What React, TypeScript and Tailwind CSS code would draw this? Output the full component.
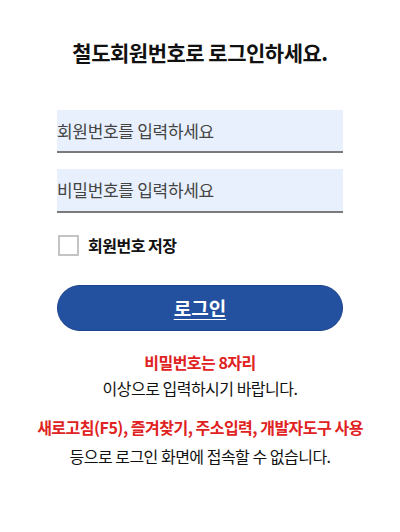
import React from "react";

export default function App() {
  return (
    <div
      className="w-[400px] h-[532px] bg-white flex flex-col items-center"
      style={{ fontFamily: '"Noto Sans CJK KR", "Noto Sans", sans-serif' }}
    >
      <h1 className="mt-[37px] text-[21px] leading-[30px] font-bold text-[#111] tracking-[-0.5px]">
        철도회원번호로 로그인하세요.
      </h1>
      <div className="mt-[43px] w-[286px] flex flex-col">
        <div className="h-[43px] bg-[#e8f0fe] border-b-2 border-[#7a7a7a] flex items-center">
          <span className="text-[17px] text-[#444] tracking-[-0.3px]">회원번호를 입력하세요</span>
        </div>
        <div className="mt-[16px] h-[44px] bg-[#e8f0fe] border-b-2 border-[#7a7a7a] flex items-center">
          <span className="text-[17px] text-[#444] tracking-[-0.3px]">비밀번호를 입력하세요</span>
        </div>
        <div className="mt-[20px] flex items-center">
          <div className="w-[21px] h-[21px] border-2 border-[#c4c4c4] bg-white ml-[1px]" />
          <span className="ml-[9px] text-[16px] font-bold text-[#111] tracking-[-0.5px]">회원번호 저장</span>
        </div>
        <button className="mt-[28px] h-[46px] rounded-full bg-[#2351a0] border border-[#1c448c] text-white text-[19px] font-bold underline underline-offset-[3px] decoration-1">
          로그인
        </button>
      </div>
      <p className="mt-[19px] text-[16px] leading-[24px] font-bold text-[#e02222] tracking-[-0.5px]">
        비밀번호는 8자리
      </p>
      <p className="mt-[2px] text-[16px] leading-[24px] text-[#111] tracking-[-0.5px]">
        이상으로 입력하시기 바랍니다.
      </p>
      <p className="mt-[15px] text-[16px] leading-[24px] font-bold text-[#e02222] tracking-[-0.5px]">
        새로고침(F5), 즐겨찾기, 주소입력, 개발자도구 사용
      </p>
      <p className="mt-[5px] text-[16px] leading-[24px] text-[#111] tracking-[-0.5px]">
        등으로 로그인 화면에 접속할 수 없습니다.
      </p>
    </div>
  );
}
